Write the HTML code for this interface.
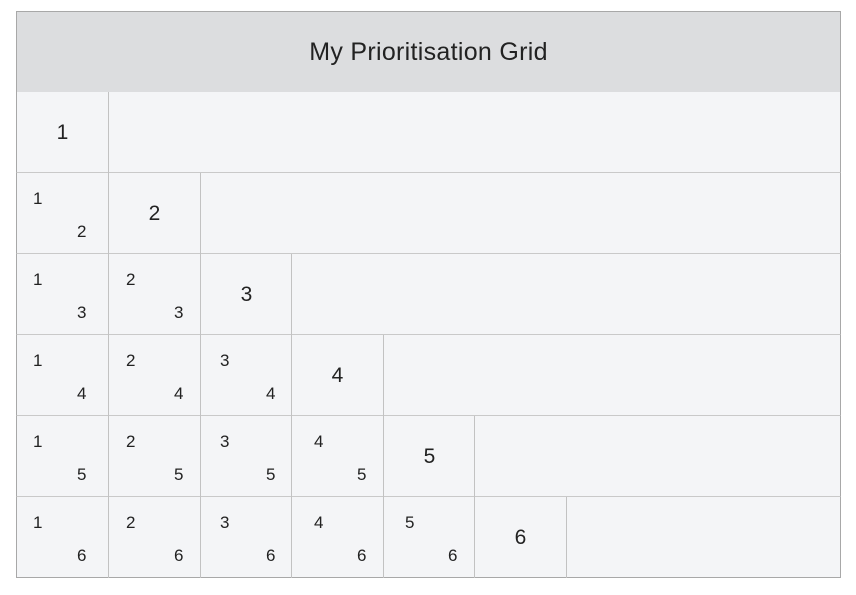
<!DOCTYPE html>
<html><head><meta charset="utf-8"><style>
body{margin:0;width:856px;height:595px;background:#fff;font-family:"Liberation Sans",sans-serif;color:#222;position:relative;overflow:hidden}
.a{position:absolute}
.hd{left:16px;top:11px;width:823px;height:80px;background:#dcdddf;border:1px solid #a8a8a8;text-align:center;line-height:80px;font-size:25px;color:#222;letter-spacing:0.3px}
.row{position:absolute;left:16px;width:823px;height:80px;background:#f4f5f7;border-left:1px solid #a8a8a8;border-right:1px solid #a8a8a8;border-bottom:1px solid #c9c9c9}
.v{position:absolute;width:1px;background:#c2c2c2}
.s{position:absolute;font-size:17px;line-height:17px}
.b{position:absolute;font-size:21px;line-height:21px;width:91px;text-align:center}
</style></head><body>
<div class="a hd">My Prioritisation Grid</div>
<div class="row" style="top:92px"></div>
<div class="row" style="top:173px"></div>
<div class="row" style="top:254px"></div>
<div class="row" style="top:335px"></div>
<div class="row" style="top:416px"></div>
<div class="row" style="top:497px;border-bottom-color:#a8a8a8"></div>
<div id="g"></div>
<script>
var cols=[16,108,200,291,383,474,566],tops=[92,173,254,335,416,497];
var tx=[33,126,220,314,405],bx=[77,174,266,357,448];
var h='';
for(var r=0;r<6;r++){
 var t=tops[r];
 for(var c=1;c<=r+1;c++){h+='<div class="v" style="left:'+cols[c]+'px;top:'+t+'px;height:81px"></div>';}
 for(var c=0;c<r;c++){
  h+='<div class="s" style="left:'+tx[c]+'px;top:'+(t+17)+'px">'+(c+1)+'</div>';
  h+='<div class="s" style="left:'+bx[c]+'px;top:'+(t+50)+'px">'+(r+1)+'</div>';
 }
 h+='<div class="b" style="left:'+(cols[r]+1)+'px;top:'+(t+30)+'px">'+(r+1)+'</div>';
}
document.getElementById('g').innerHTML=h;
</script>
</body></html>
